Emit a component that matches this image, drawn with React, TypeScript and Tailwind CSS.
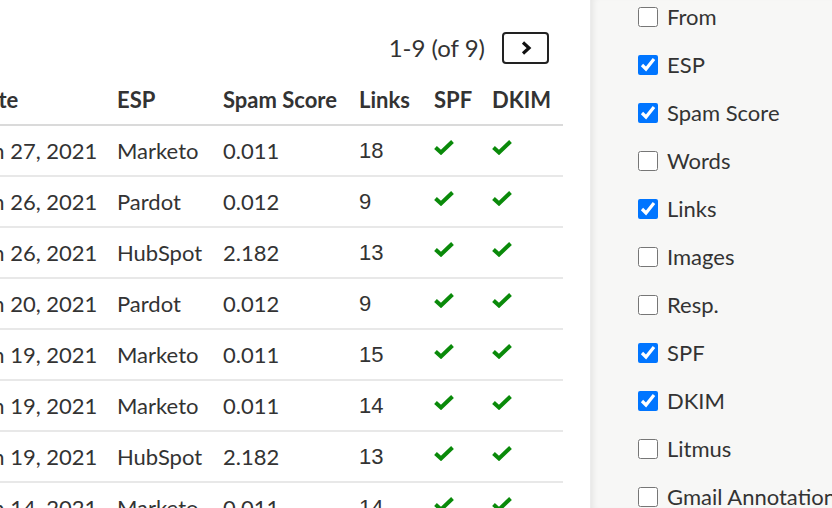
const rows = [
  { date: "Jun 27, 2021", esp: "Marketo", score: "0.011", links: "18" },
  { date: "Jun 26, 2021", esp: "Pardot", score: "0.012", links: "9" },
  { date: "Jun 26, 2021", esp: "HubSpot", score: "2.182", links: "13" },
  { date: "Jun 20, 2021", esp: "Pardot", score: "0.012", links: "9" },
  { date: "Jun 19, 2021", esp: "Marketo", score: "0.011", links: "15" },
  { date: "Jun 19, 2021", esp: "Marketo", score: "0.011", links: "14" },
  { date: "Jun 19, 2021", esp: "HubSpot", score: "2.182", links: "13" },
  { date: "Jun 14, 2021", esp: "Marketo", score: "0.011", links: "14" },
];

const columns = [
  { label: "From", on: false },
  { label: "ESP", on: true },
  { label: "Spam Score", on: true },
  { label: "Words", on: false },
  { label: "Links", on: true },
  { label: "Images", on: false },
  { label: "Resp.", on: false },
  { label: "SPF", on: true },
  { label: "DKIM", on: true },
  { label: "Litmus", on: false },
  { label: "Gmail Annotations", on: false },
];

function Check() {
  return (
    <svg width="20" height="16" viewBox="0 0 20 16" className="block">
      <path d="M1.5 8.5 L7 13.5 L18.5 2.5" fill="none" stroke="#0a8a0a" strokeWidth="4" strokeLinejoin="miter" />
    </svg>
  );
}

export default function App() {
  return (
    <div
      className="flex h-[508px] w-[832px] overflow-hidden bg-white text-[#333]"
      style={{ fontFamily: "Lato, 'Noto Sans', sans-serif" }}
    >
      <div className="w-[590px] shrink-0 overflow-hidden">
        <div className="flex items-center justify-end pt-8 pr-[41px] gap-[17px]">
          <span className="text-[24px] leading-none">1-9 (of 9)</span>
          <button className="flex h-8 w-[47px] items-center justify-center rounded-[4px] border-2 border-[#222] bg-white">
            <svg width="12" height="16" viewBox="0 0 12 16">
              <path d="M3 2.5 L9 8 L3 13.5" fill="none" stroke="#111" strokeWidth="3.2" />
            </svg>
          </button>
        </div>
        <table className="ml-[-37px] mt-[11px] table-fixed border-collapse text-[22px]">
          <colgroup>
            <col className="w-[146px]" />
            <col className="w-[106px]" />
            <col className="w-[136px]" />
            <col className="w-[75px]" />
            <col className="w-[58px]" />
            <col className="w-[79px]" />
          </colgroup>
          <thead>
            <tr className="h-[50px] border-b-2 border-[#dadada]">
              {["Date", "ESP", "Spam Score", "Links", "SPF", "DKIM"].map((h) => (
                <th key={h} className="px-2 text-left font-bold whitespace-nowrap">
                  {h}
                </th>
              ))}
            </tr>
          </thead>
          <tbody>
            {rows.map((r, i) => (
              <tr key={i} className="h-[51px] border-b-2 border-[#e8e8e8]">
                <td className="px-2 whitespace-nowrap">{r.date}</td>
                <td className="px-2">{r.esp}</td>
                <td className="px-2">{r.score}</td>
                <td className="px-2" style={{ fontFamily: "'Liberation Sans', Arial, sans-serif" }}>
                  {r.links}
                </td>
                <td className="px-2 align-top pt-[13px]">
                  <Check />
                </td>
                <td className="px-2 align-top pt-[13px]">
                  <Check />
                </td>
              </tr>
            ))}
          </tbody>
        </table>
      </div>
      <div className="relative flex-1 bg-[#f7f7f6] shadow-[inset_6px_0_6px_-4px_rgba(0,0,0,0.08)] border-l border-[#ececec]">
        <ul className="flex flex-col pl-[47px] pt-[5px] gap-[24px]">
          {columns.map((c) => (
            <li key={c.label} className="flex items-center gap-[9px] h-[24px] whitespace-nowrap">
              <input type="checkbox" defaultChecked={c.on} className="m-0 h-5 w-5" />
              <span className="text-[22px] leading-none mt-[-1px]">{c.label}</span>
            </li>
          ))}
        </ul>
      </div>
    </div>
  );
}
